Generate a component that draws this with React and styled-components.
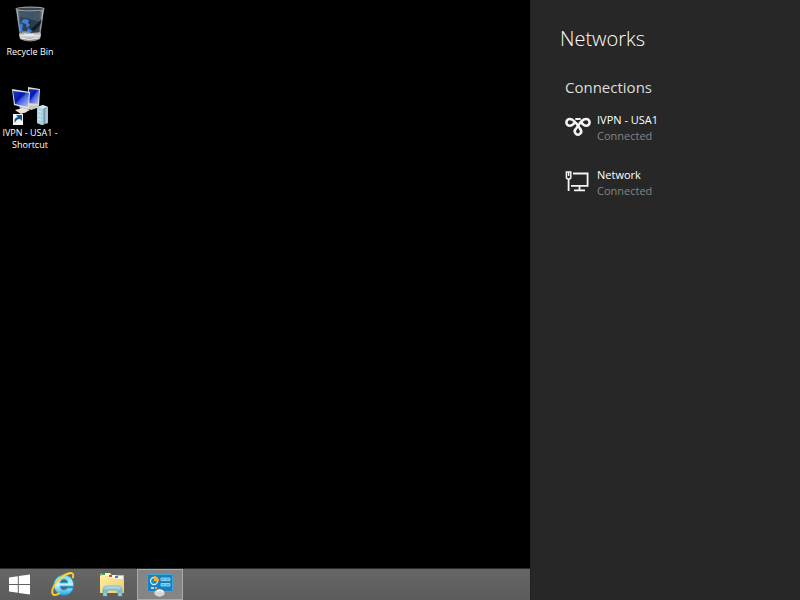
import React from "react";
import styled, { createGlobalStyle } from "styled-components";

const GlobalStyle = createGlobalStyle`
  *, *::before, *::after { box-sizing: border-box; }
  body {
    margin: 0;
    background: #000;
    color: #fff;
    font-family: "Open Sans", "Noto Sans", sans-serif;
  }
  button {
    margin: 0;
    padding: 0;
    border: 0;
    background: none;
    color: inherit;
    font: inherit;
  }
  svg { display: block; flex: none; }
`;

const Screen = styled.div`
  display: grid;
  grid-template-columns: minmax(0, 1fr) 270px;
  min-height: 100vh;
`;

const Workspace = styled.main`
  display: flex;
  flex-direction: column;
  background: #000;
`;

const Desktop = styled.section`
  display: flex;
  flex: 1;
  flex-direction: column;
  align-items: flex-start;
  gap: 27px;
  padding-top: 5px;
`;

const Shortcut = styled.button`
  display: flex;
  flex-direction: column;
  align-items: center;
  gap: 2px;
  width: 60px;
  font-size: 9px;
  line-height: 12px;
  text-align: center;
`;

const Taskbar = styled.nav`
  display: flex;
  height: 32px;
  background: linear-gradient(#666, #5c5c5c);
  border-top: 1px solid #2c2c2c;
`;

const TaskButton = styled.button`
  display: flex;
  align-items: center;
  justify-content: center;
  width: ${(p) => (p.$start ? "39px" : p.$active ? "46px" : "49px")};
  background: ${(p) => (p.$active ? "#858585" : "transparent")};
  border: ${(p) => (p.$active ? "1px solid #aaa" : "0")};
`;

const Panel = styled.aside`
  padding: 24px 29px;
  background: #272727;
  border-left: 1px solid #222;
`;

const PanelTitle = styled.h1`
  margin: 0;
  font-size: 20px;
  font-weight: 300;
  line-height: 30px;
  color: #fff;
`;

const PanelHeading = styled.h2`
  margin: 21px 0 13px;
  padding-left: 5px;
  font-size: 15px;
  font-weight: 400;
  line-height: 24px;
  color: #dedede;
`;

const NetworkList = styled.ul`
  display: flex;
  flex-direction: column;
  gap: 23px;
  margin: 0;
  padding: 0 0 0 5px;
  list-style: none;
`;

const NetworkButton = styled.button`
  display: flex;
  align-items: center;
  gap: 6px;
  width: 100%;
  text-align: left;
  font-size: 11px;
  line-height: 16px;
`;

const NetworkName = styled.span`
  display: block;
`;

const NetworkStatus = styled.span`
  display: block;
  color: #858585;
`;

function RecycleBinIcon() {
  return (
    <svg width="34" height="39" viewBox="0 0 34 39" aria-hidden="true">
      <defs>
        <linearGradient id="binGlass" x2="1" y2="0">
          <stop offset="0" stopColor="#a4abb0" />
          <stop offset=".16" stopColor="#364656" />
          <stop offset=".5" stopColor="#26394b" />
          <stop offset=".82" stopColor="#343f49" />
          <stop offset="1" stopColor="#bdc2c5" />
        </linearGradient>
        <linearGradient id="binBase" x2="0" y2="1">
          <stop offset="0" stopColor="#858b90" />
          <stop offset=".4" stopColor="#e4e4e4" />
          <stop offset="1" stopColor="#777" />
        </linearGradient>
      </defs>
      <path d="M3 4h28l-4 30q-10 4-20 0z" fill="url(#binGlass)" />
      <path d="M5 7h24l-2 10-21-6z" fill="#4f6779" opacity=".6" />
      <path d="m18 24 11-10-1 5-7 7z" fill="#111b24" />
      <path d="m8 17 3-3 5 1-1 3 2 2-3 3-1-4-3-1zM7 18l3 2-1 4 2 4-4-2zM10 26l4 0 1-3 4 3-2 3-6 1z" fill="#3b82e0" />
      <path d="M6 29q4-3 8-2l4 1 9-1 1 2-1 5q-10 5-20 0z" fill="url(#binBase)" />
      <path d="M8 33q8 3 17 0M11 29l4 1 6-1" fill="none" stroke="#fff" opacity=".8" />
      <path d="m4 6 4 27M30 6l-4 27" stroke="#d0d3d5" opacity=".5" />
      <ellipse cx="17" cy="4" rx="14" ry="1.8" fill="#3b4650" stroke="#9aa0a4" strokeWidth="1.2" />
    </svg>
  );
}

function VpnShortcutIcon() {
  return (
    <svg width="40" height="40" viewBox="0 2 40 40" aria-hidden="true">
      <defs>
        <linearGradient id="monitorBlue" x2="1" y2="1">
          <stop offset="0" stopColor="#1c3fc4" />
          <stop offset=".42" stopColor="#0714ae" />
          <stop offset=".54" stopColor="#4462e0" />
          <stop offset="1" stopColor="#bccbf7" />
        </linearGradient>
        <linearGradient id="serverSide">
          <stop offset="0" stopColor="#b9dae8" />
          <stop offset=".5" stopColor="#638da3" />
          <stop offset="1" stopColor="#b5cad4" />
        </linearGradient>
      </defs>
      <path d="m18 22 8 0 4 2-9 3-5-2z" fill="#c9c7c1" />
      <path d="m18 4 12 2-1 17-11-1z" fill="#dedbd1" />
      <path d="m19 6 10 1-1 14-10-1z" fill="url(#monitorBlue)" />
      <path d="m9 22 7 2 3 3-4 3-9-2 4-2z" fill="#b9b7b1" />
      <path d="m5 27 8-2 7 2-9 4z" fill="#e6e4df" />
      <path d="m2 6 18 3-1 17-15-4z" fill="#e5e3db" />
      <path d="m3 8 16 2-1 14-13-3z" fill="url(#monitorBlue)" />
      <path d="m27 24 6-2 5 2v16l-6 2-5-2z" fill="#7b9eaf" />
      <path d="m27 24 5 2v16l-5-2z" fill="#abd4e3" />
      <path d="m32 26 6-2v16l-6 2z" fill="url(#serverSide)" />
      <path d="m27 24 6-2 5 2-6 2z" fill="#d1e8ef" />
      <path d="m28 28 3 1m-3 3 3 1m-3 3 3 1M36 26v14" stroke="#e0f4f9" opacity=".8" />
      <path d="M3 31h10v11H3z" fill="#f3f4f5" />
      <path d="M5 40q-2-5 3-6l-2-2h6v6l-2-2q-4 0-5 4z" fill="#17549c" />
    </svg>
  );
}

function WindowsIcon() {
  return (
    <svg width="21" height="21" viewBox="0 0 21 21" fill="#fff" aria-hidden="true">
      <path d="M0 3.5 8.8 2.3V10H0zM9.8 2.1 21 .5V10H9.8zM0 11h8.8v7.7L0 17.5zM9.8 11H21v9.5L9.8 18.9z" />
    </svg>
  );
}

function ExplorerIcon() {
  return (
    <svg width="26" height="26" viewBox="1 1 26 26" aria-hidden="true">
      <defs>
        <linearGradient id="ieBlue" x2="0" y2="1">
          <stop offset="0" stopColor="#73d5f4" />
          <stop offset=".5" stopColor="#c8f4ff" />
          <stop offset="1" stopColor="#29a7e2" />
        </linearGradient>
      </defs>
      <path d="M23.5 15.2H10.1c.3 2.3 1.6 3.7 3.8 3.7 1.7 0 2.7-.7 3.4-2h5.8c-1 4.2-4.8 7.1-9.4 7.1-5.6 0-9.7-4-9.7-9.7C4 8.4 8.1 4 13.8 4c6.1 0 10.2 4.5 9.7 11.2zM17.8 11.8c-.2-2.2-1.7-3.5-3.8-3.5s-3.5 1.3-3.9 3.5z" fill="url(#ieBlue)" stroke="#21a2df" strokeWidth="1" fillRule="evenodd" />
      <path d="M22.7 7.2C23.7 4 23.2 2 20.8 2 16 2 8 7.4 4.2 14.5 1.2 20.1 1.6 24 5 23.9c1.5 0 3-.7 4.6-1.8" fill="none" stroke="#f6c928" strokeWidth="2" />
      <path d="M21.5 2.5C17 2.4 9 8 5.2 14.5" fill="none" stroke="#ffe675" strokeWidth=".8" />
    </svg>
  );
}

function FolderIcon() {
  return (
    <svg width="26" height="25" viewBox="1 0 26 25" aria-hidden="true">
      <defs>
        <linearGradient id="folderYellow" x2="1" y2="1">
          <stop offset="0" stopColor="#fff1a1" />
          <stop offset="1" stopColor="#e7c96f" />
        </linearGradient>
        <linearGradient id="folderStand" x2="0" y2="1">
          <stop offset="0" stopColor="#c1e8f3" />
          <stop offset=".5" stopColor="#6fb5d2" />
          <stop offset="1" stopColor="#a8d9e9" />
        </linearGradient>
      </defs>
      <path d="M1 3 3 1h8l2 2h12v18H1z" fill="#ddc166" />
      <path d="M3 1h8v3H3zm6 2h8v3H9zm7 1h8v3h-8z" fill="#f7f4e4" />
      <path d="M3 1h3v2H3z" fill="#29a738" />
      <path d="M10 3h3v2h-3z" fill="#d24535" />
      <path d="M16 4h3v2h-3z" fill="#3786c3" />
      <path d="M1 4h7l2 2h6l2 1h7v14H1z" fill="url(#folderYellow)" />
      <path d="M4 24v-6q0-4 4-4h11q4 0 4 4v6h-4v-4q0-2-2-2h-7q-2 0-2 2v4z" fill="url(#folderStand)" stroke="#559fbd" strokeWidth=".6" />
    </svg>
  );
}

function ControlPanelIcon() {
  return (
    <svg width="26" height="24" viewBox="0 0 26 24" aria-hidden="true">
      <rect x=".5" y="1.5" width="25" height="17" rx="1" fill="#1c7fbd" stroke="#42a5d8" />
      <circle cx="7" cy="8" r="3.5" fill="#198cc8" stroke="#c8eaf8" strokeWidth="1.3" />
      <path d="M7 8V3a5 5 0 0 1 5 5z" fill="#ffad24" />
      <path d="M14 5h9v2.5h-9zm0 5.5h9V13h-9z" fill="#43b4e1" stroke="#9fdaf3" strokeWidth=".8" />
      <path d="M18 5v2.5m0 3V13" stroke="#9fdaf3" />
      <path d="M4 14h3v2H4z" fill="#a5ddf5" />
      <path d="M8 14h2v2H8z" fill="#edaa34" />
      <ellipse cx="12.5" cy="20" rx="5.2" ry="3.7" fill="#d5d8da" />
      <path d="M10 18q4-2 6 1" fill="none" stroke="#fff" strokeWidth="1.5" />
    </svg>
  );
}

function VpnIcon() {
  return (
    <svg width="26" height="26" viewBox="0 0 26 26" fill="none" stroke="#f5f5f5" strokeWidth="2.5" strokeLinecap="round" aria-hidden="true">
      <path d="M15.6 14.5C13 10.5 9.5 4 4.8 4a3.4 3.4 0 0 0 0 6.800c2.300 0 3.600-1.600 4.900-3.300" />
      <path d="M16.3 7.5c1.3 1.7 2.600 3.300 4.900 3.300a3.400 3.400 0 0 0 0-6.800C16 4 14.500 9.500 10.600 14.200a3.200 3.200 0 1 0 5 .3" />
      <path d="M11 4h4" strokeWidth="1.8" />
    </svg>
  );
}

function WiredIcon() {
  return (
    <svg width="26" height="26" viewBox="0 0 26 26" fill="none" stroke="#f5f5f5" strokeWidth="1.8" aria-hidden="true">
      <path d="M8 3.500h14.600v12.300H6M14.500 16v4M9 20.400h11" />
      <path d="M1.400 2h4.400v5.500q0 1.500-2.200 1.500t-2.200-1.500zM3.600 2v4" strokeWidth="1.500" />
      <path d="M3.600 9v12" />
    </svg>
  );
}

const networks = [
  { name: "IVPN - USA1", status: "Connected", Icon: VpnIcon },
  { name: "Network", status: "Connected", Icon: WiredIcon },
];

export default function App() {
  return (
    <>
      <GlobalStyle />
      <Screen>
        <Workspace>
          <Desktop aria-label="Desktop">
            <Shortcut type="button"><RecycleBinIcon />Recycle Bin</Shortcut>
            <Shortcut type="button"><VpnShortcutIcon />IVPN - USA1 - Shortcut</Shortcut>
          </Desktop>
          <Taskbar aria-label="Taskbar">
            <TaskButton type="button" aria-label="Start" $start><WindowsIcon /></TaskButton>
            <TaskButton type="button" aria-label="Internet Explorer"><ExplorerIcon /></TaskButton>
            <TaskButton type="button" aria-label="File Explorer"><FolderIcon /></TaskButton>
            <TaskButton type="button" aria-label="Control Panel" $active><ControlPanelIcon /></TaskButton>
          </Taskbar>
        </Workspace>
        <Panel>
          <PanelTitle>Networks</PanelTitle>
          <PanelHeading>Connections</PanelHeading>
          <NetworkList>
            {networks.map(({ name, status, Icon }) => (
              <li key={name}>
                <NetworkButton type="button">
                  <Icon />
                  <span>
                    <NetworkName>{name}</NetworkName>
                    <NetworkStatus>{status}</NetworkStatus>
                  </span>
                </NetworkButton>
              </li>
            ))}
          </NetworkList>
        </Panel>
      </Screen>
    </>
  );
}
